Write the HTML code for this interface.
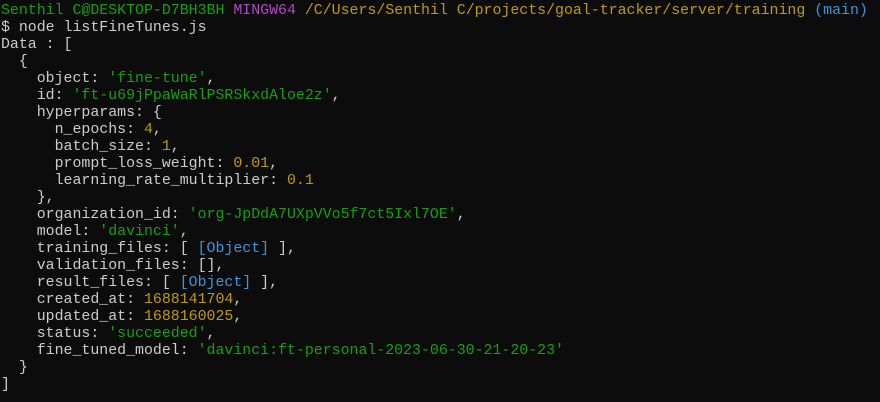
<!DOCTYPE html>
<html><head><meta charset="utf-8"><style>
html,body{margin:0;padding:0;background:#0c0c0c;width:880px;height:402px;overflow:hidden}
.t{position:absolute;left:1px;top:3px;font-family:"Liberation Mono",monospace;font-size:14.9px;color:#cccccc}
.t div{height:17px;line-height:17px;overflow:visible;white-space:pre}
.g{color:#13a10e}.p{color:#b148c6}.y{color:#c19c00}.c{color:#3a96dd}
</style></head><body><div class="t"><div><span class="g">Senthil C@DESKTOP-D7BH3BH</span> <span class="p">MINGW64</span> <span class="y">/C/Users/Senthil C/projects/goal-tracker/server/training</span> <span class="c">(main)</span></div><div>$ node listFineTunes.js</div><div>Data : [</div><div>  {</div><div>    object: <span class="g">'fine-tune'</span>,</div><div>    id: <span class="g">'ft-u69jPpaWaRlPSRSkxdAloe2z'</span>,</div><div>    hyperparams: {</div><div>      n_epochs: <span class="y">4</span>,</div><div>      batch_size: <span class="y">1</span>,</div><div>      prompt_loss_weight: <span class="y">0.01</span>,</div><div>      learning_rate_multiplier: <span class="y">0.1</span></div><div>    },</div><div>    organization_id: <span class="g">'org-JpDdA7UXpVVo5f7ct5Ixl7OE'</span>,</div><div>    model: <span class="g">'davinci'</span>,</div><div>    training_files: [ <span class="c">[Object]</span> ],</div><div>    validation_files: [],</div><div>    result_files: [ <span class="c">[Object]</span> ],</div><div>    created_at: <span class="y">1688141704</span>,</div><div>    updated_at: <span class="y">1688160025</span>,</div><div>    status: <span class="g">'succeeded'</span>,</div><div>    fine_tuned_model: <span class="g">'davinci:ft-personal-2023-06-30-21-20-23'</span></div><div>  }</div><div>]</div></div></body></html>
